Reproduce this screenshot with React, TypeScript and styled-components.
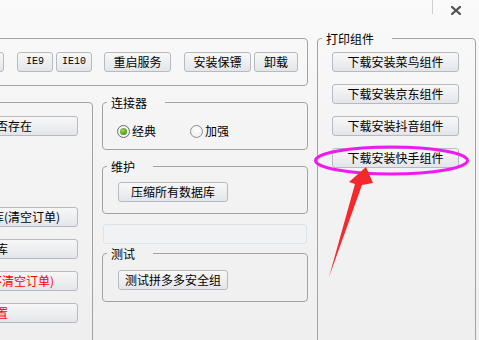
import React from 'react';
import styled, { createGlobalStyle } from 'styled-components';

const GlobalStyle = createGlobalStyle`
  html, body {
    margin: 0;
    padding: 0;
    background: #f4f4f4;
  }
`;

const uiFont = `"Noto Sans CJK SC", "Noto Sans", sans-serif`;

const Window = styled.div`
  position: relative;
  width: 479px;
  height: 340px;
  overflow: hidden;
  background: linear-gradient(#fafafa 0%, #f4f4f4 40%, #efefef 100%);
  font-family: ${uiFont};
  font-size: 12px;
  color: #000;
`;

const TitleStrip = styled.div`
  height: 31px;
  display: flex;
  justify-content: flex-end;
  align-items: flex-start;
`;

const Separator = styled.div`
  width: 1px;
  height: 14px;
  background: #cfcfcf;
`;

const CloseArea = styled.div`
  width: 46px;
  height: 20px;
  display: flex;
  justify-content: center;
  align-items: center;
`;

const Body = styled.div`
  display: flex;
  align-items: flex-start;
`;

const LeftStack = styled.div`
  width: 448px;
  margin-left: -140px;
  display: flex;
  flex-direction: column;
  flex-shrink: 0;
`;

const TopGroup = styled.div`
  box-sizing: border-box;
  margin-top: 7px;
  height: 48px;
  padding: 13px 9px 13px 0;
  border: 1px solid #a3a3a3;
  border-radius: 4px;
  display: flex;
  justify-content: flex-end;
`;

const LowerRow = styled.div`
  display: flex;
  margin-top: 9px;
  gap: 9px;
`;

const Group = styled.fieldset<{ $w?: number; $h?: number }>`
  box-sizing: border-box;
  margin: 0;
  padding: 0;
  min-width: 0;
  border: 1px solid #a3a3a3;
  border-radius: 4px;
  ${p => (p.$w ? `width: ${p.$w}px;` : '')}
  ${p => (p.$h ? `height: ${p.$h}px;` : '')}
`;

const Legend = styled.legend`
  font-size: 12px;
  line-height: 15px;
  margin-left: 4px;
  padding: 0 18px 0 4px;
`;

const GroupInner = styled.div<{ $pt: number; $pb?: number; $pl?: number; $pr?: number; $gap?: number; $end?: boolean }>`
  display: flex;
  flex-direction: column;
  align-items: ${p => (p.$end ? 'flex-end' : 'flex-start')};
  gap: ${p => p.$gap ?? 0}px;
  padding: ${p => p.$pt}px ${p => p.$pr ?? 0}px ${p => p.$pb ?? 0}px ${p => p.$pl ?? 0}px;
`;

const MiddleCol = styled.div`
  width: 206px;
  display: flex;
  flex-direction: column;
`;

const Button = styled.button<{ $w: number; $ml?: number; $mt?: number; $red?: boolean; $mono?: boolean }>`
  box-sizing: border-box;
  flex-shrink: 0;
  width: ${p => p.$w}px;
  height: 20px;
  margin: ${p => p.$mt ?? 0}px 0 0 ${p => p.$ml ?? 0}px;
  padding: 0;
  border: 1px solid #b6bbc1;
  border-radius: 3px;
  background: linear-gradient(#f7f7f7 0%, #eeeff1 50%, #e3e5e9 100%);
  color: ${p => (p.$red ? '#ff0000' : '#000')};
  font-family: ${p => (p.$mono ? `"Liberation Mono", "DejaVu Sans Mono", monospace` : uiFont)};
  font-size: ${p => (p.$mono ? 10 : 12)}px;
  line-height: 18px;
  white-space: nowrap;
  overflow: hidden;
  display: flex;
  justify-content: center;
  align-items: center;
`;

const RadioRow = styled.div`
  display: flex;
  align-items: center;
  height: 16px;
  padding: 13px 0 10px 14px;
  gap: 34px;
`;

const RadioItem = styled.label`
  display: flex;
  align-items: center;
  gap: 2px;
  line-height: 16px;
`;

const RadioCircle = styled.span<{ $on?: boolean }>`
  box-sizing: border-box;
  width: 13px;
  height: 13px;
  border-radius: 50%;
  border: 1px solid ${p => (p.$on ? '#6b6b6b' : '#8f8f8f')};
  background: radial-gradient(circle at 50% 40%, #ffffff 0%, #e9e9e9 100%);
  display: flex;
  justify-content: center;
  align-items: center;
  &::after {
    content: '';
    display: ${p => (p.$on ? 'block' : 'none')};
    width: 7px;
    height: 7px;
    border-radius: 50%;
    background: radial-gradient(circle at 40% 35%, #9fd35a 0%, #4c9a12 70%, #3a7d0c 100%);
  }
`;

const DisabledBox = styled.div`
  box-sizing: border-box;
  height: 20px;
  margin: 10px 1px 2px 1px;
  border: 1px solid #dde3ea;
  border-radius: 3px;
  background: #f1f2f4;
`;

const RightGroup = styled(Group)`
  margin-left: 9px;
  flex-shrink: 0;
`;

const Overlay = styled.svg`
  position: absolute;
  left: 0;
  top: 0;
  pointer-events: none;
`;

const topButtons = [
  { text: 'IE8', w: 36, ml: 0 },
  { text: 'IE9', w: 36, ml: 13 },
  { text: 'IE10', w: 36, ml: 3 },
  { text: '重启服务', w: 67, ml: 12 },
  { text: '安装保镖', w: 67, ml: 13 },
  { text: '卸载', w: 44, ml: 3 },
];

const leftButtons = [
  { text: '检查数据库是否存在', mt: 0 },
  { text: '一键清空重置数据库(清空订单)', mt: 71 },
  { text: '备份数据库', mt: 12 },
  { text: '一键重置数据库(不清空订单)', mt: 12, red: true },
  { text: '初始化配置', mt: 12, red: true },
];

const printButtons = ['下载安装菜鸟组件', '下载安装京东组件', '下载安装抖音组件', '下载安装快手组件'];

const App: React.FC = () => {
  return (
    <Window>
      <GlobalStyle />
      <TitleStrip>
        <Separator />
        <CloseArea>
          <svg width="10" height="9" viewBox="0 0 10 9">
            <path d="M1 1 L9 8 M9 1 L1 8" stroke="#505050" strokeWidth="2.2" strokeLinecap="square" />
          </svg>
        </CloseArea>
      </TitleStrip>
      <Body>
        <LeftStack>
          <TopGroup>
            {topButtons.map(b => (
              <Button key={b.text} $w={b.w} $ml={b.ml} $mono={b.text.startsWith('IE')}>
                {b.text}
              </Button>
            ))}
          </TopGroup>
          <LowerRow>
            <Group $w={233} $h={260}>
              <Legend>数据库操作</Legend>
              <GroupInner $pt={6} $pr={14} $end>
                {leftButtons.map(b => (
                  <Button key={b.text} $w={200} $mt={b.mt} $red={b.red}>
                    {b.text}
                  </Button>
                ))}
              </GroupInner>
            </Group>
            <MiddleCol>
              <Group>
                <Legend>连接器</Legend>
                <RadioRow>
                  <RadioItem>
                    <RadioCircle $on />
                    经典
                  </RadioItem>
                  <RadioItem>
                    <RadioCircle />
                    加强
                  </RadioItem>
                </RadioRow>
              </Group>
              <Group style={{ marginTop: 9 }}>
                <Legend>维护</Legend>
                <GroupInner $pt={8} $pb={11} $pl={15}>
                  <Button $w={110}>压缩所有数据库</Button>
                </GroupInner>
              </Group>
              <DisabledBox />
              <Group>
                <Legend>测试</Legend>
                <GroupInner $pt={9} $pb={11} $pl={15}>
                  <Button $w={110}>测试拼多多安全组</Button>
                </GroupInner>
              </Group>
            </MiddleCol>
          </LowerRow>
        </LeftStack>
        <RightGroup $w={159} $h={330}>
          <Legend>打印组件</Legend>
          <GroupInner $pt={6} $pl={14} $gap={12}>
            {printButtons.map(t => (
              <Button key={t} $w={127}>
                {t}
              </Button>
            ))}
          </GroupInner>
        </RightGroup>
      </Body>
      <Overlay width="479" height="340" viewBox="0 0 479 340">
        <ellipse cx="391.5" cy="160.5" rx="76" ry="13.5" fill="none" stroke="#f01af0" strokeWidth="3" />
        <polygon
          points="366,167 373,183 362,185 329,277 355,184 349,182"
          fill="#f5282c"
        />
      </Overlay>
    </Window>
  );
};

export default App;
